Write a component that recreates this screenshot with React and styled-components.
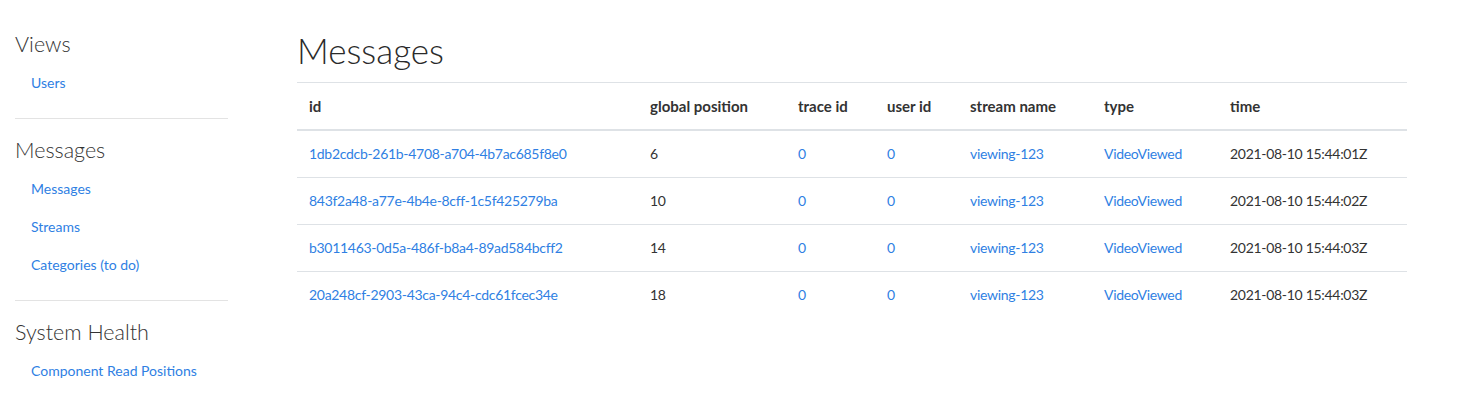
import React from "react";
import styled, { createGlobalStyle } from "styled-components";

const Global = createGlobalStyle`
  html, body { margin: 0; padding: 0; background: #fff; }
  body {
    font-family: "Lato", "Noto Sans", sans-serif;
    font-size: 14px;
    line-height: 22px;
    color: #2b2b2b;
  }
  * { box-sizing: border-box; }
`;

const Page = styled.div`
  display: flex;
  align-items: flex-start;
  padding: 0 50px 0 15px;
  gap: 69px;
`;

const Sidebar = styled.nav`
  width: 213px;
  flex: none;
  padding-top: 29px;
`;

const Section = styled.section`
  display: flex;
  flex-direction: column;
`;

const SectionTitle = styled.h4`
  margin: 0 0 5px;
  font-size: 21.5px;
  line-height: 30px;
  font-weight: 300;
  color: #333;
`;

const NavLink = styled.a`
  display: block;
  padding: 8px 16px;
  font-size: 14px;
  line-height: 22px;
  color: #2f7fe3;
  text-decoration: none;
`;

const Divider = styled.hr`
  border: 0;
  border-top: 1px solid #e3e3e3;
  margin: 16px 0;
`;

const Main = styled.main`
  flex: 1;
  min-width: 0;
  padding-top: 26px;
`;

const Title = styled.h1`
  margin: 0 0 8px;
  font-size: 35px;
  line-height: 48px;
  font-weight: 300;
  color: #2a2a2a;
`;

const Table = styled.table`
  width: 100%;
  border-collapse: collapse;
  border-top: 1px solid #dee2e6;
`;

const Th = styled.th`
  width: ${(p) => p.$w}px;
  text-align: left;
  padding: 12px;
  font-size: 15px;
  font-weight: 700;
  color: #333;
  line-height: 22px;
  border-bottom: 2px solid #dee2e6;
  white-space: nowrap;
`;

const Td = styled.td`
  padding: 12px;
  line-height: 22px;
  color: #333;
  letter-spacing: -0.3px;
  border-top: 1px solid #dee2e6;
  white-space: nowrap;
`;

const Row = styled.tr`
  &:first-child td { border-top: 0; }
`;

const Link = styled.a`
  color: #2f7fe3;
  text-decoration: none;
`;

const cols = [
  ["id", 341],
  ["global position", 148],
  ["trace id", 89],
  ["user id", 83],
  ["stream name", 134],
  ["type", 126],
  ["time", 189],
];

const rows = [
  ["1db2cdcb-261b-4708-a704-4b7ac685f8e0", "6", "2021-08-10 15:44:01Z"],
  ["843f2a48-a77e-4b4e-8cff-1c5f425279ba", "10", "2021-08-10 15:44:02Z"],
  ["b3011463-0d5a-486f-b8a4-89ad584bcff2", "14", "2021-08-10 15:44:03Z"],
  ["20a248cf-2903-43ca-94c4-cdc61fcec34e", "18", "2021-08-10 15:44:03Z"],
];

const nav = [
  { title: "Views", links: ["Users"] },
  { title: "Messages", links: ["Messages", "Streams", "Categories (to do)"] },
  { title: "System Health", links: ["Component Read Positions"] },
];

export default function App() {
  return (
    <>
      <Global />
      <Page>
        <Sidebar>
          {nav.map((s, i) => (
            <React.Fragment key={s.title}>
              {i > 0 && <Divider />}
              <Section>
                <SectionTitle>{s.title}</SectionTitle>
                {s.links.map((l) => (
                  <NavLink key={l} href="#">
                    {l}
                  </NavLink>
                ))}
              </Section>
            </React.Fragment>
          ))}
        </Sidebar>
        <Main>
          <Title>Messages</Title>
          <Table>
            <thead>
              <tr>
                {cols.map(([c, w]) => (
                  <Th key={c} $w={w}>
                    {c}
                  </Th>
                ))}
              </tr>
            </thead>
            <tbody>
              {rows.map(([id, pos, time]) => (
                <Row key={id}>
                  <Td>
                    <Link href="#">{id}</Link>
                  </Td>
                  <Td>{pos}</Td>
                  <Td>
                    <Link href="#">0</Link>
                  </Td>
                  <Td>
                    <Link href="#">0</Link>
                  </Td>
                  <Td>
                    <Link href="#">viewing-123</Link>
                  </Td>
                  <Td>
                    <Link href="#">VideoViewed</Link>
                  </Td>
                  <Td>{time}</Td>
                </Row>
              ))}
            </tbody>
          </Table>
        </Main>
      </Page>
    </>
  );
}
